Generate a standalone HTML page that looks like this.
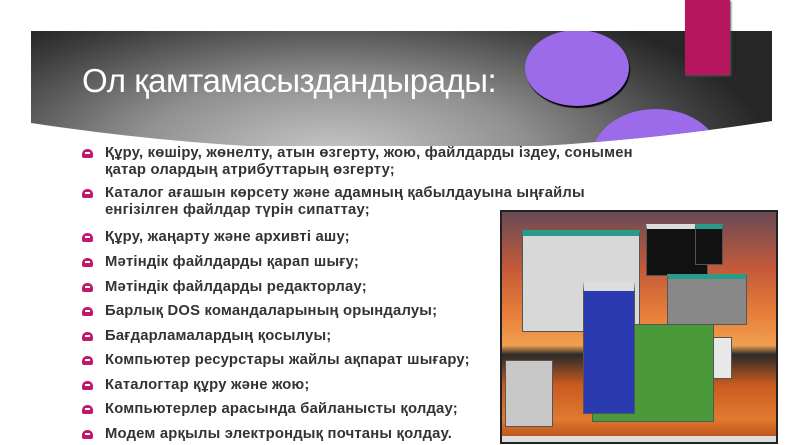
<!DOCTYPE html>
<html><head><meta charset="utf-8"><style>
body{margin:0;width:800px;height:445px;overflow:hidden;background:#fff;position:relative;font-family:"Liberation Sans",sans-serif}
.ban{position:absolute;left:31px;top:31px;width:741px;height:115px;overflow:hidden;
clip-path:path('M0 0 L741 0 L741 90 Q370 148 0 92 Z');
background:radial-gradient(ellipse 440px 170px at 300px 125px,#c8c8c8 0%,#909090 45%,#404040 85%,#262626 100%)}
.c1{position:absolute;left:494px;top:-1px;width:104px;height:76px;border-radius:50%;background:#9b6bea;box-shadow:1px 2px 1px #000}
.c2{position:absolute;left:560px;top:78px;width:130px;height:100px;border-radius:50%;background:#9b6bea}
.mag{position:absolute;left:685px;top:0;width:45px;height:75px;background:#b5165e;box-shadow:1px 1px 2px #555}
h1{position:absolute;left:82px;top:62px;margin:0;font-weight:normal;font-size:33px;color:#fff;letter-spacing:-0.5px}
.t{position:absolute;left:105px;font-weight:bold;font-size:14.8px;color:#333;line-height:16.5px;letter-spacing:0.2px}
.b{position:absolute;left:82px;width:11px;height:9px;background:#c2186b;border-radius:5px 5px 2px 2px}
.b:after{content:"";position:absolute;left:3px;top:3px;width:5px;height:2px;background:#fff}
.img{position:absolute;left:500px;top:210px;width:274px;height:230px;border:2px solid #222;overflow:hidden;
background:linear-gradient(#6a4a55 0%,#c45a3a 25%,#e8803a 45%,#f0a050 58%,#2a2a2a 62%,#c85a20 75%,#e07a30 90%,#b54a18 100%)}
.w{position:absolute;background:#d8d8d8;border:1px solid #555}
</style></head><body>
<div class="ban"><div class="c2"></div><div class="c1"></div></div>
<div class="mag"></div>
<h1>Ол қамтамасыздандырады:</h1>
<div class="b" style="top:149px"></div><div class="t" style="top:145px">Құру, көшіру, жөнелту, атын өзгерту, жою, файлдарды іздеу, сонымен<br>қатар олардың атрибуттарың өзгерту;</div>
<div class="b" style="top:189px"></div><div class="t" style="top:185px">Каталог ағашын көрсету және адамның қабылдауына ыңғайлы<br>енгізілген файлдар түрін сипаттау;</div>
<div class="b" style="top:233px"></div><div class="t" style="top:229px">Құру, жаңарту және архивті ашу;</div>
<div class="b" style="top:258px"></div><div class="t" style="top:254px">Мәтіндік файлдарды қарап шығу;</div>
<div class="b" style="top:283px"></div><div class="t" style="top:279px">Мәтіндік файлдарды редакторлау;</div>
<div class="b" style="top:307px"></div><div class="t" style="top:303px">Барлық DOS командаларының орындалуы;</div>
<div class="b" style="top:332px"></div><div class="t" style="top:328px">Бағдарламалардың қосылуы;</div>
<div class="b" style="top:356px"></div><div class="t" style="top:352px">Компьютер ресурстары жайлы ақпарат шығару;</div>
<div class="b" style="top:381px"></div><div class="t" style="top:377px">Каталогтар құру және жою;</div>
<div class="b" style="top:405px"></div><div class="t" style="top:401px">Компьютерлер арасында байланысты қолдау;</div>
<div class="b" style="top:430px"></div><div class="t" style="top:426px">Модем арқылы электрондық почтаны қолдау.</div>
<div class="img">
<div class="w" style="left:20px;top:18px;width:116px;height:95px;border-top:6px solid #2a9a8a"></div>
<div class="w" style="left:144px;top:12px;width:60px;height:46px;background:#111;border-top:5px solid #ddd"></div>
<div class="w" style="left:193px;top:12px;width:26px;height:35px;background:#111;border-top:5px solid #2a9a8a"></div>
<div class="w" style="left:165px;top:62px;width:78px;height:45px;background:#888;border-top:5px solid #2a9a8a"></div>
<div class="w" style="left:174px;top:125px;width:54px;height:40px;background:#e8e8e8"></div>
<div class="w" style="left:90px;top:112px;width:120px;height:96px;background:#4a9a3a"></div>
<div class="w" style="left:81px;top:69px;width:50px;height:122px;background:#2a3ab0;border-top:10px solid #ddd"></div>
<div class="w" style="left:3px;top:148px;width:46px;height:65px;background:#c8c8c8"></div>
<div style="position:absolute;left:0;bottom:0;width:274px;height:6px;background:#ddd"></div>
</div>
</body></html>
